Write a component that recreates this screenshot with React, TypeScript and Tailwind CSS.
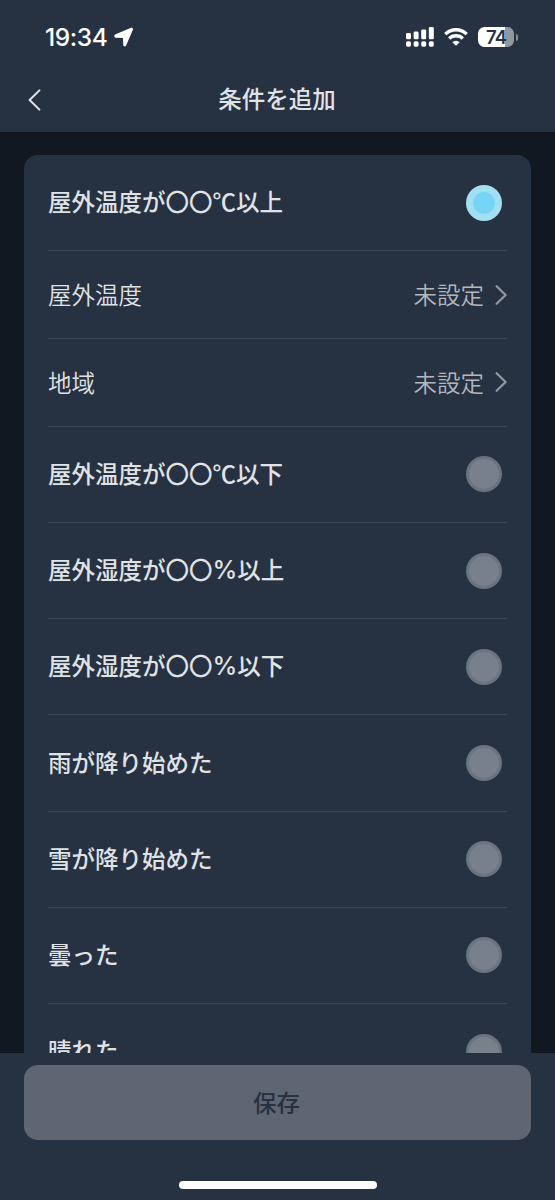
import clsx from "clsx";

type Condition = {
  label: string;
  selected?: boolean;
  settings?: string[];
};

const conditions: Condition[] = [
  {
    label: "屋外温度が〇〇℃以上",
    selected: true,
    settings: ["屋外温度", "地域"],
  },
  { label: "屋外温度が〇〇℃以下" },
  { label: "屋外湿度が〇〇%以上" },
  { label: "屋外湿度が〇〇%以下" },
  { label: "雨が降り始めた" },
  { label: "雪が降り始めた" },
  { label: "曇った" },
  { label: "晴れた" },
];

const StatusBar = () => {
  return (
    <div className="flex h-[68px] items-start justify-between pt-[22px] pr-[37px] pl-[45px] text-white">
      <div className="flex h-[30px] items-center gap-[7px]">
        <span className="font-['Inter'] text-[24.5px] leading-[30px] font-[550] tracking-[-0.4px]">
          19:34
        </span>
        {/* location arrow */}
        <svg width="20" height="20" viewBox="0 0 20 20" fill="currentColor">
          <path d="M1.1 7.6 17 .8c1.3-.5 2.4.6 1.9 1.9l-6.8 15.9c-.7 1.4-2.7 1.1-2.8-.5l-.3-7-7-.3C.3 10.7-.3 8.2 1.1 7.6Z" />
        </svg>
      </div>
      <div className="flex h-[30px] items-center">
        {/* dual sim signal */}
        <svg width="28" height="20" viewBox="0 0 28 20" fill="currentColor">
          <rect x="0" y="6" width="5" height="6.3" rx="1.4" />
          <rect x="7.6" y="4.6" width="5" height="7.7" rx="1.4" />
          <rect x="15.2" y="2.4" width="5" height="9.9" rx="1.4" />
          <rect x="22.8" y="0" width="5" height="12.3" rx="1.4" />
          <rect x="0" y="14.3" width="5" height="5.4" rx="1.6" />
          <rect x="7.6" y="14.3" width="5" height="5.4" rx="1.6" />
          <rect x="15.2" y="14.3" width="5" height="5.4" rx="1.6" />
          <rect x="22.8" y="14.3" width="5" height="5.4" rx="1.6" />
        </svg>
        <svg
          className="ml-[10px]"
          width="24"
          height="18"
          viewBox="0 0 24 18"
          fill="none"
          stroke="currentColor"
          strokeWidth="3.3"
        >
          <path d="M1.3 6.1a15.3 15.3 0 0 1 21.4 0" />
          <path d="M5.2 10.5a9.8 9.8 0 0 1 13.6 0" />
          <path
            d="M12 17.8 8.3 14.2a5.2 5.2 0 0 1 7.4 0Z"
            fill="currentColor"
            stroke="none"
          />
        </svg>
        <div className="ml-[10px] flex h-5 w-9 items-center justify-center rounded-[6.5px] bg-linear-to-r from-white from-75% to-[#9298a1] to-75% font-['Inter'] text-[18.5px] leading-none font-semibold tracking-[-1px] text-[#263141]">
          74
        </div>
        <div className="ml-[1.5px] h-[7px] w-[2.5px] rounded-r-full bg-[#858c96]" />
      </div>
    </div>
  );
};

const Header = () => {
  return (
    <div className="grid h-16 grid-cols-[1fr_auto_1fr] items-center">
      <svg
        className="ml-7"
        width="14"
        height="22"
        viewBox="0 0 14 22"
        fill="none"
        stroke="#dfe2e5"
        strokeWidth="2"
        strokeLinecap="round"
        strokeLinejoin="round"
      >
        <path d="M11.4 1.4 1.6 11l9.8 9.6" />
      </svg>
      <h1 className="pr-px pb-0.5 text-[23.5px] leading-none font-medium">
        条件を追加
      </h1>
    </div>
  );
};

const Radio = ({ selected }: { selected?: boolean }) => {
  return (
    <div
      className={clsx(
        "mr-[5px] flex size-[36px] items-center justify-center rounded-full",
        selected ? "bg-[#a2dff1]" : "bg-[#6a737f]",
      )}
    >
      <div
        className={clsx(
          "rounded-full",
          selected ? "size-[22px] bg-[#76d5f6]" : "size-[30px] bg-[#77808b]",
        )}
      />
    </div>
  );
};

const SettingRow = ({ label }: { label: string }) => {
  return (
    <div className="flex h-[87.85px] items-center justify-between border-b border-[#3c4856]">
      <span className="font-[350]">{label}</span>
      <div className="flex items-center gap-[11px] text-[#b2b7bd]">
        <span className="font-[350]">未設定</span>
        <svg
          width="12"
          height="20"
          viewBox="0 0 12 20"
          fill="none"
          stroke="#9299a2"
          strokeWidth="2.2"
          strokeLinecap="round"
          strokeLinejoin="round"
        >
          <path d="m1.6 1.2 9 8.8-9 8.8" />
        </svg>
      </div>
    </div>
  );
};

// the percent sign is set wider than the CJK font's own
const ConditionLabel = ({ label }: { label: string }) => {
  const [before, after] = label.split("%");
  return (
    <span className="pb-px font-medium">
      {before}
      {after && (
        <span className="font-['Inter'] text-[25px] leading-none">%</span>
      )}
      {after}
    </span>
  );
};

const ConditionRow = ({ label, selected, settings }: Condition) => {
  return (
    <>
      <div className="flex h-[96.2px] items-center justify-between border-b border-[#3c4856]">
        <ConditionLabel label={label} />
        <Radio selected={selected} />
      </div>
      {settings?.map((setting) => (
        <SettingRow key={setting} label={setting} />
      ))}
    </>
  );
};

export default function App() {
  return (
    <div className="flex h-[1200px] w-[555px] flex-col overflow-hidden bg-[#263141] font-['Noto_Sans_CJK_JP',sans-serif] text-[#e0e3e5]">
      <StatusBar />
      <Header />
      <main className="h-[921px] overflow-hidden bg-[#111822] px-6 pt-[23px]">
        <div className="rounded-t-[14px] bg-[#263141] px-6 text-[23.5px] leading-none">
          {conditions.map((condition) => (
            <ConditionRow key={condition.label} {...condition} />
          ))}
        </div>
      </main>
      {/* save bar */}
      <footer className="flex flex-1 flex-col items-center px-6 pt-3">
        <button className="h-[75px] w-full rounded-[14px] bg-[#5f6672] pr-0.5 text-[23.5px] leading-none font-medium text-[#263141]">
          保存
        </button>
        <div className="mt-[41px] h-[8px] w-[198px] rounded-full bg-white" />
      </footer>
    </div>
  );
}
